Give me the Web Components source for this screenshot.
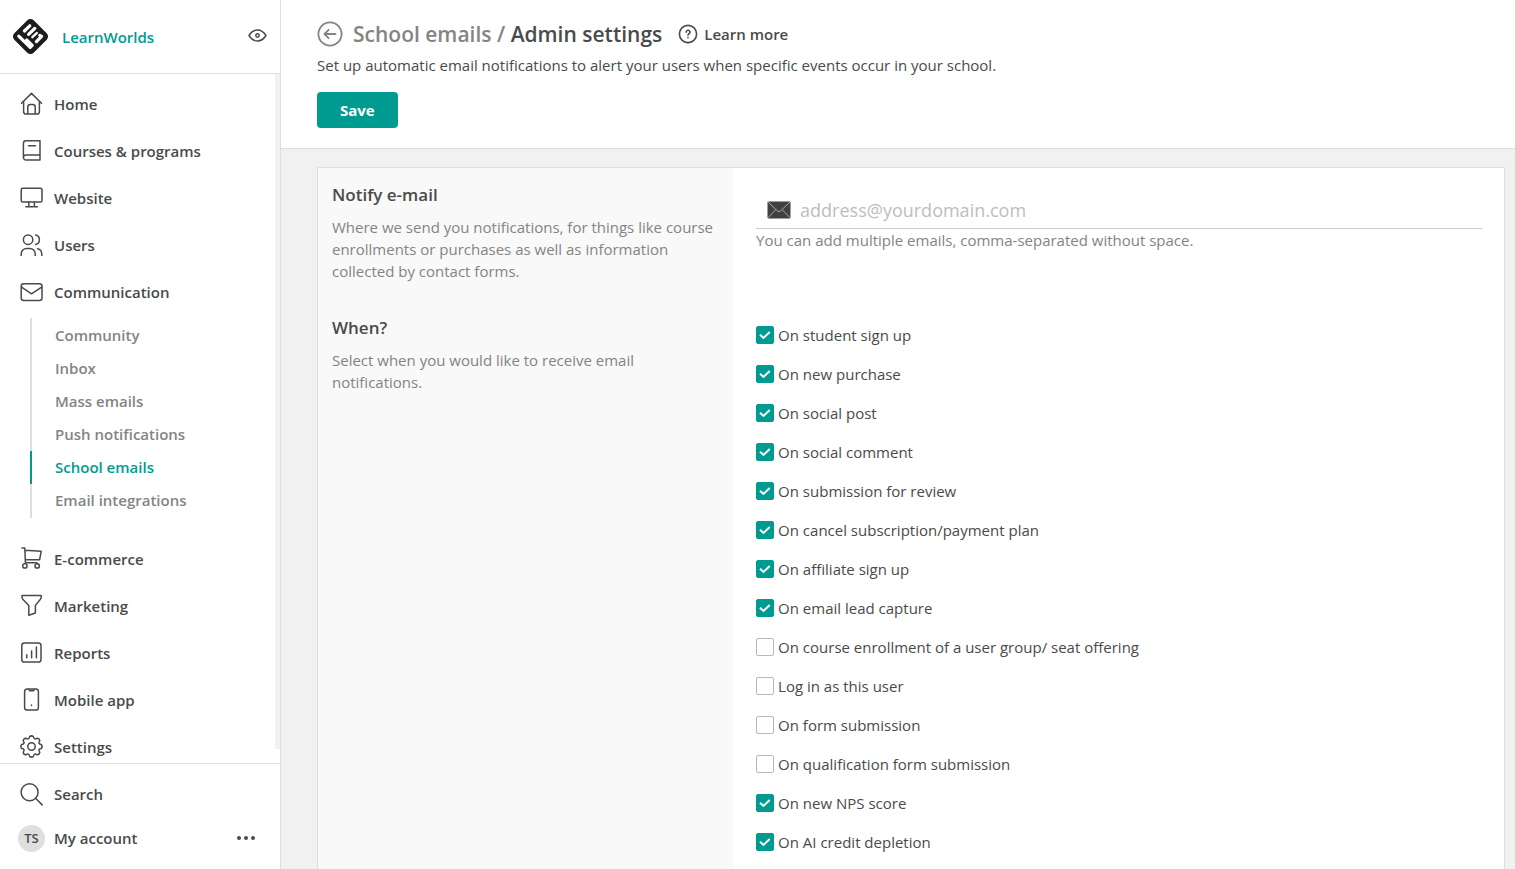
<!DOCTYPE html>
<html lang="en">
<head>
<meta charset="utf-8">
<meta name="viewport" content="width=device-width, initial-scale=1">
<title>Admin settings</title>
<style>
  html, body {
    height: 100%;
    margin: 0;
  }
  body {
    --teal: #009b90;
    --text: #4a4a4a;
    --muted: #848484;
    --line: #dedede;
    --bg: #f1f1f1;
    font-family: "Open Sans", "Noto Sans", sans-serif;
    font-size: 15px;
    line-height: 22px;
    color: var(--text);
    background: var(--bg);
  }
</style>
</head>
<body>
<school-admin></school-admin>

<script>
// Outline of the settings gear: eight teeth around (11.5, 11.5)
function gearPath() {
  const point = (r, deg) => {
    const a = (deg - 90) * Math.PI / 180;
    return `${(11.5 + r * Math.cos(a)).toFixed(2)} ${(11.5 + r * Math.sin(a)).toFixed(2)}`;
  };
  let d = `M${point(10, -11)}`;
  for (let a = 0; a < 360; a += 45) {
    d += `Q${point(11.4, a)} ${point(10, a + 11)}Q${point(6.6, a + 22.5)} ${point(10, a + 34)}`;
  }
  return d + 'Z';
}

const icons = {
  home: '<path d="M1.5 11.3 11.5 1.4l10 9.9M3.6 9.4v10a2.6 2.6 0 0 0 2.6 2.6h10.6a2.6 2.6 0 0 0 2.6-2.6v-10M7.8 22v-6.9a2.5 2.5 0 0 1 2.5-2.5h2.4a2.5 2.5 0 0 1 2.5 2.5V22"/>',
  book: '<path d="M20 1.8H6a2.6 2.6 0 0 0-2.6 2.6v14a2.6 2.6 0 0 0 2.6 2.6h14zM3.4 18.4A2.5 2.5 0 0 1 5.9 16H20M8.5 6.8h7"/>',
  website: '<rect x="1.2" y="2.2" width="20.8" height="13.8" rx="1.5"/><path d="M8.8 16v4.2M14.4 16v4.2M5.8 20.8h11.6"/>',
  users: '<circle cx="8.1" cy="6.7" r="4.7"/><path d="M1.2 22.6v-1.8a5.4 5.4 0 0 1 5.4-5.4h3.2a5.4 5.4 0 0 1 5.4 5.4v1.8M15.6 2a4.8 4.8 0 0 1 0 9.4M17.6 15.8a5.6 5.6 0 0 1 4.2 5.2v1.6"/>',
  mail: '<rect x="1.2" y="3.8" width="20.8" height="16.6" rx="2.5"/><path d="m1.6 7.2 9.9 6.6 10.1-6.6"/>',
  cart: '<path d="M2 .9h2.8l.6 14.8M5 3.2l16.2 1-1.6 8.6H5.2M5.4 15.8h10.4a2.6 2.6 0 0 1 2 .9"/><circle cx="4.9" cy="18.9" r="2.2"/><circle cx="17.2" cy="18.9" r="2.2"/>',
  funnel: '<path d="M2 1.4h19.2v1.8a2.8 2.8 0 0 1-.8 2L15.4 11.4V19l-6.6 2.2v-9.8L2.8 5.2A2.8 2.8 0 0 1 2 3.2z"/>',
  reports: '<rect x="1.8" y="1.9" width="19.2" height="19.2" rx="2.6"/><path d="M6.8 13.8v3M11.6 10v6.8M16.4 6v10.8"/>',
  phone: '<rect x="4.6" y="1" width="13.8" height="21" rx="2.6"/><path d="m8.8 1.6 1 1.2h3.6l1-1.2M11.5 17v.6"/>',
  gear: `<circle cx="11.5" cy="11.5" r="3.7"/><path d="${gearPath()}"/>`,
  search: '<circle cx="9.6" cy="9.3" r="8.5"/><path d="m15.8 15.5 6.4 6.4"/>',
  eye: '<path d="M3 10.5C5.4 6.8 8.2 5 11.5 5s6.1 1.8 8.5 5.5c-2.4 3.7-5.2 5.5-8.5 5.5S5.4 14.2 3 10.5z"/><circle cx="11.5" cy="10.5" r="1.7"/>'
};

class LwIcon extends HTMLElement {
  constructor() {
    super();
    this.attachShadow({ mode: 'open' });
  }

  connectedCallback() {
    this.shadowRoot.innerHTML = `
      <style>
        :host {
          display: block;
          flex: none;
          width: 23px;
          height: 23px;
        }
        svg {
          display: block;
          fill: none;
          stroke: currentColor;
          stroke-width: 1.5;
          stroke-linecap: round;
          stroke-linejoin: round;
        }
      </style>
      <svg width="23" height="23" viewBox="0 0 23 23" aria-hidden="true">${icons[this.getAttribute('name')]}</svg>
    `;
  }
}

class NavItem extends HTMLElement {
  constructor() {
    super();
    this.attachShadow({ mode: 'open' });
  }

  connectedCallback() {
    this.shadowRoot.innerHTML = `
      <style>
        :host {
          display: block;
        }
        a {
          display: flex;
          align-items: center;
          gap: 11px;
          height: 47px;
          padding-left: 20px;
          color: inherit;
          font-weight: 600;
          text-decoration: none;
        }
        a:hover {
          color: var(--teal);
        }
      </style>
      <a href="#"><lw-icon name="${this.getAttribute('icon')}"></lw-icon><slot></slot></a>
    `;
  }
}

class NavSubitem extends HTMLElement {
  constructor() {
    super();
    this.attachShadow({ mode: 'open' });
  }

  connectedCallback() {
    this.shadowRoot.innerHTML = `
      <style>
        :host {
          display: block;
        }
        a {
          display: block;
          padding-left: 23px;
          border-left: 2px solid var(--line);
          color: var(--muted);
          font-weight: 600;
          line-height: 33px;
          text-decoration: none;
        }
        :host([active]) a {
          border-color: var(--teal);
          color: var(--teal);
        }
      </style>
      <a href="#"><slot></slot></a>
    `;
  }
}

class SideBar extends HTMLElement {
  constructor() {
    super();
    this.attachShadow({ mode: 'open' });
  }

  connectedCallback() {
    this.shadowRoot.innerHTML = `
      <style>
        :host {
          display: flex;
          flex-direction: column;
          width: 280px;
          flex: none;
          background: white;
          border-right: 1px solid var(--line);
        }
        header {
          display: flex;
          align-items: center;
          gap: 13px;
          height: 73px;
          padding: 0 11px 0 12px;
          border-bottom: 1px solid var(--line);
        }
        header a {
          flex: 1;
          color: var(--teal);
          font-weight: 600;
          text-decoration: none;
        }
        button {
          padding: 0;
          border: none;
          background: none;
          color: inherit;
          cursor: pointer;
        }
        .scroller {
          display: flex;
          flex: 1;
          min-height: 0;
          overflow: hidden;
        }
        nav {
          flex: 1;
          padding-top: 6px;
        }
        .submenu {
          margin: 3px 0 17px 30px;
          padding: 1px 0;
          background: linear-gradient(var(--line), var(--line)) left / 2px 100% no-repeat;
        }
        .thumb {
          width: 5px;
          margin-bottom: 14px;
          background: var(--bg);
        }
        footer {
          padding: 8px 0 9px;
          border-top: 1px solid var(--line);
        }
        .row {
          display: flex;
          align-items: center;
          gap: 11px;
          box-sizing: border-box;
          width: 100%;
          height: 44px;
          padding: 0 23px 0 20px;
          font: inherit;
          font-weight: 600;
        }
        .account {
          gap: 9px;
          padding-left: 18px;
        }
        .avatar {
          width: 27px;
          border-radius: 50%;
          background: #dfdfdf;
          font-size: 13px;
          line-height: 27px;
          text-align: center;
        }
        .name {
          flex: 1;
          text-align: left;
        }
        .dots {
          display: flex;
          gap: 3px;
          padding: 8px 2px;
        }
        .dots i {
          width: 4px;
          height: 4px;
          border-radius: 50%;
          background: currentColor;
        }
      </style>
      <header>
        <svg width="37" height="37" viewBox="0 0 37 37" aria-hidden="true">
          <rect x="4.8" y="4.8" width="27.4" height="27.4" rx="4.5" transform="rotate(45 18.5 18.5)" fill="#1d1d1b"/>
          <g fill="none" stroke="white" stroke-linecap="round" stroke-linejoin="round" stroke-width="3.2">
            <path d="M6.8 18.2 18.2 29.4l2-2-5.600-5.400"/>
            <path d="m12.4 13 5.4-5.2"/>
            <path d="M16.600 16.400 22.800 10.400"/>
            <path d="m20.400 19.200 4.400-4.200" stroke-width="2.400"/>
            <path d="m24.400 23.600 5.200-5.200-1.800-1"/>
          </g>
        </svg>
        <a href="#">LearnWorlds</a>
        <button type="button" aria-label="Preview"><lw-icon name="eye"></lw-icon></button>
      </header>
      <div class="scroller">
        <nav>
          <nav-item icon="home">Home</nav-item>
          <nav-item icon="book">Courses &amp; programs</nav-item>
          <nav-item icon="website">Website</nav-item>
          <nav-item icon="users">Users</nav-item>
          <nav-item icon="mail">Communication</nav-item>
          <div class="submenu">
            <nav-subitem>Community</nav-subitem>
            <nav-subitem>Inbox</nav-subitem>
            <nav-subitem>Mass emails</nav-subitem>
            <nav-subitem>Push notifications</nav-subitem>
            <nav-subitem active>School emails</nav-subitem>
            <nav-subitem>Email integrations</nav-subitem>
          </div>
          <nav-item icon="cart">E-commerce</nav-item>
          <nav-item icon="funnel">Marketing</nav-item>
          <nav-item icon="reports">Reports</nav-item>
          <nav-item icon="phone">Mobile app</nav-item>
          <nav-item icon="gear">Settings</nav-item>
        </nav>
        <div class="thumb"></div>
      </div>
      <footer>
        <button type="button" class="row"><lw-icon name="search"></lw-icon>Search</button>
        <button type="button" class="row account">
          <span class="avatar">TS</span>
          <span class="name">My account</span>
          <span class="dots"><i></i><i></i><i></i></span>
        </button>
      </footer>
    `;
  }
}

class PageHeader extends HTMLElement {
  constructor() {
    super();
    this.attachShadow({ mode: 'open' });
  }

  connectedCallback() {
    this.shadowRoot.innerHTML = `
      <style>
        :host {
          display: block;
          padding: 19px 36px 20px;
          background: white;
          border-bottom: 1px solid var(--line);
        }
        .title {
          display: flex;
          align-items: center;
          gap: 10px;
          height: 30px;
        }
        h1 {
          margin: 0 6px 0 0;
          font-size: 21px;
          font-weight: 600;
          line-height: 30px;
        }
        a {
          color: inherit;
          text-decoration: none;
        }
        .crumb, .back {
          color: var(--muted);
        }
        .learn {
          display: flex;
          align-items: center;
          gap: 6px;
          font-weight: 600;
        }
        svg {
          display: block;
          fill: none;
          stroke: currentColor;
          stroke-linecap: round;
          stroke-linejoin: round;
        }
        p {
          margin: 5px 0 16px;
        }
        button {
          height: 36px;
          padding: 0 23px;
          border: none;
          border-radius: 4px;
          background: var(--teal);
          color: white;
          font: inherit;
          font-weight: 700;
          cursor: pointer;
        }
      </style>
      <div class="title">
        <a class="back" href="#" aria-label="Back">
          <svg width="26" height="26" viewBox="0 0 26 26" stroke-width="1.8"><circle cx="13" cy="13" r="11.6"/><path d="M18.5 13h-11M11.6 8.8 7.4 13l4.2 4.2"/></svg>
        </a>
        <h1><a class="crumb" href="#">School emails /</a> Admin settings</h1>
        <a class="learn" href="#">
          <svg width="20" height="20" viewBox="0 0 20 20" stroke-width="1.6"><circle cx="10" cy="10" r="8.6"/><path d="M8.2 8.2a1.9 1.9 0 1 1 2.8 1.6c-.7.4-1 .7-1 1.3M10 13.6v.1"/></svg>
          Learn more
        </a>
      </div>
      <p><slot></slot></p>
      <button type="button">Save</button>
    `;
  }
}

class SettingSection extends HTMLElement {
  constructor() {
    super();
    this.attachShadow({ mode: 'open' });
  }

  connectedCallback() {
    this.shadowRoot.innerHTML = `
      <style>
        :host {
          display: grid;
          grid-template-columns: 35% 1fr;
        }
        .info {
          padding: 15px 14px 19px;
          background: #f9f9f9;
        }
        h2 {
          margin: 0 0 9px;
          font-size: 17px;
          font-weight: 600;
          line-height: 24px;
        }
        p {
          margin: 0;
          color: var(--muted);
        }
        .control {
          padding: 25px 22px 0 23px;
        }
      </style>
      <div class="info">
        <h2>${this.getAttribute('heading')}</h2>
        <p>${this.getAttribute('text')}</p>
      </div>
      <div class="control"><slot></slot></div>
    `;
  }
}

class EmailField extends HTMLElement {
  constructor() {
    super();
    this.attachShadow({ mode: 'open' });
  }

  connectedCallback() {
    this.shadowRoot.innerHTML = `
      <style>
        :host {
          display: block;
          color: var(--muted);
        }
        .field {
          display: flex;
          align-items: center;
          gap: 9px;
          height: 34px;
          padding: 0 0 1px 11px;
          border-bottom: 1px solid #ccc;
        }
        input {
          flex: 1;
          min-width: 0;
          padding: 0;
          border: none;
          outline: none;
          background: none;
          color: #4a4a4a;
          font: inherit;
          font-size: 18px;
        }
        input::placeholder {
          color: #bdbdbd;
        }
        p {
          margin: 0;
        }
      </style>
      <div class="field">
        <svg width="24" height="18" viewBox="0 0 24 18" aria-hidden="true">
          <rect x=".5" y=".5" width="23" height="17" rx="1" fill="#404040"/>
          <path d="m1 1 9.5 9q1.5 1.3 3 0L23 1M1 16.800l7.6-8M23 16.800l-7.6-8" fill="none" stroke="#a8a8a8"/>
        </svg>
        <input type="email" multiple placeholder="address@yourdomain.com" aria-label="Notify e-mail" aria-describedby="hint">
      </div>
      <p id="hint">You can add multiple emails, comma-separated without space.</p>
    `;
  }
}

class CheckOption extends HTMLElement {
  constructor() {
    super();
    this.attachShadow({ mode: 'open' });
  }

  connectedCallback() {
    this.shadowRoot.innerHTML = `
      <style>
        :host {
          display: block;
        }
        div {
          display: flex;
          align-items: center;
          gap: 4px;
          height: 18px;
        }
        input {
          appearance: none;
          flex: none;
          box-sizing: border-box;
          width: 18px;
          height: 18px;
          margin: 0;
          border: 1px solid #b8b8b8;
          border-radius: 2px;
          background: white;
        }
        input:checked {
          border-color: var(--teal);
          background: var(--teal) url('data:image/svg+xml,<svg xmlns="http://www.w3.org/2000/svg" viewBox="0 0 16 16"><path d="M3 7.8 6.5 11 12.7 5" fill="none" stroke="white" stroke-width="2"/></svg>');
        }
      </style>
      <div>
        <input type="checkbox" id="option" ${this.hasAttribute('checked') ? 'checked' : ''}>
        <label for="option"><slot></slot></label>
      </div>
    `;
  }
}

class SchoolAdmin extends HTMLElement {
  constructor() {
    super();
    this.attachShadow({ mode: 'open' });
  }

  connectedCallback() {
    this.shadowRoot.innerHTML = `
      <style>
        :host {
          display: flex;
          height: 100vh;
          overflow: hidden;
        }
        main {
          display: flex;
          flex: 1;
          flex-direction: column;
          min-width: 0;
        }
        .panel {
          display: grid;
          grid-template-rows: auto 1fr;
          flex: 1;
          min-height: 0;
          margin: 18px 10px 0 36px;
          border: 1px solid var(--line);
          border-bottom: none;
          background: white;
        }
        .options {
          display: grid;
          gap: 21px;
        }
      </style>
      <side-bar></side-bar>
      <main>
        <page-header>Set up automatic email notifications to alert your users when specific events occur in your school.</page-header>
        <div class="panel">
          <setting-section heading="Notify e-mail" text="Where we send you notifications, for things like course enrollments or purchases as well as information collected by contact forms.">
            <email-field></email-field>
          </setting-section>
          <setting-section heading="When?" text="Select when you would like to receive email notifications.">
            <div class="options">
              <check-option checked>On student sign up</check-option>
              <check-option checked>On new purchase</check-option>
              <check-option checked>On social post</check-option>
              <check-option checked>On social comment</check-option>
              <check-option checked>On submission for review</check-option>
              <check-option checked>On cancel subscription/payment plan</check-option>
              <check-option checked>On affiliate sign up</check-option>
              <check-option checked>On email lead capture</check-option>
              <check-option>On course enrollment of a user group/ seat offering</check-option>
              <check-option>Log in as this user</check-option>
              <check-option>On form submission</check-option>
              <check-option>On qualification form submission</check-option>
              <check-option checked>On new NPS score</check-option>
              <check-option checked>On AI credit depletion</check-option>
            </div>
          </setting-section>
        </div>
      </main>
    `;
  }
}

customElements.define('lw-icon', LwIcon);
customElements.define('nav-item', NavItem);
customElements.define('nav-subitem', NavSubitem);
customElements.define('side-bar', SideBar);
customElements.define('page-header', PageHeader);
customElements.define('setting-section', SettingSection);
customElements.define('email-field', EmailField);
customElements.define('check-option', CheckOption);
customElements.define('school-admin', SchoolAdmin);
</script>
</body>
</html>
